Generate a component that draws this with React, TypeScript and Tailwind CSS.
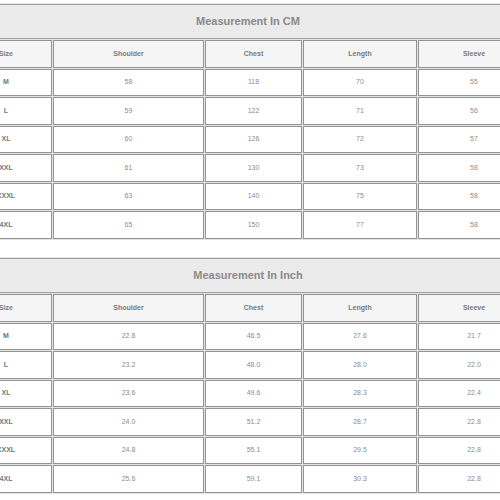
import React from "react";

const heads = ["Size", "Shoulder", "Chest", "Length", "Sleeve"];

const cm = [
  ["M", "58", "118", "70", "55"],
  ["L", "59", "122", "71", "56"],
  ["XL", "60", "126", "72", "57"],
  ["XXL", "61", "130", "73", "58"],
  ["XXXL", "63", "140", "75", "58"],
  ["4XL", "65", "150", "77", "58"],
];

const inch = [
  ["M", "22.8", "46.5", "27.6", "21.7"],
  ["L", "23.2", "48.0", "28.0", "22.0"],
  ["XL", "23.6", "49.6", "28.3", "22.4"],
  ["XXL", "24.0", "51.2", "28.7", "22.8"],
  ["XXXL", "24.8", "55.1", "29.5", "22.8"],
  ["4XL", "25.6", "59.1", "30.3", "22.8"],
];

function SizeTable({ title, rows, className }: { title: string; rows: string[][]; className: string }) {
  return (
    <div
      className={
        "grid grid-cols-[92px_151px_97px_114px_112px] grid-rows-[35px_repeat(7,27.5px)] gap-px p-px w-[572px] -ml-[41px] bg-[#e4e4e4] " +
        className
      }
    >
      <div className="col-span-5 border border-[#a0a0a0] bg-[#ebebeb] flex items-center justify-center pl-[6px] text-[11px] font-bold text-[#8a8a8a]">
        {title}
      </div>
      {heads.map((h) => (
        <div
          key={h}
          className="border border-[#949494] bg-[#f5f5f5] flex items-center justify-center text-[7px] font-bold text-[#7a7a7a]"
        >
          {h}
        </div>
      ))}
      {rows.map((r) =>
        r.map((v, i) => (
          <div
            key={r[0] + i}
            className={
              "border border-[#949494] bg-white flex items-center justify-center text-[7px] " +
              (i === 0 ? "font-bold text-[#777]" : "text-[#8c8c8c]")
            }
          >
            {v}
          </div>
        ))
      )}
    </div>
  );
}

export default function App() {
  return (
    <div
      className="w-[500px] h-[500px] overflow-hidden bg-white flex flex-col"
      style={{ fontFamily: '"Liberation Sans", Arial, sans-serif' }}
    >
      <SizeTable title="Measurement In CM" rows={cm} className="mt-[3px]" />
      <SizeTable title="Measurement In Inch" rows={inch} className="mt-[17.5px]" />
    </div>
  );
}
